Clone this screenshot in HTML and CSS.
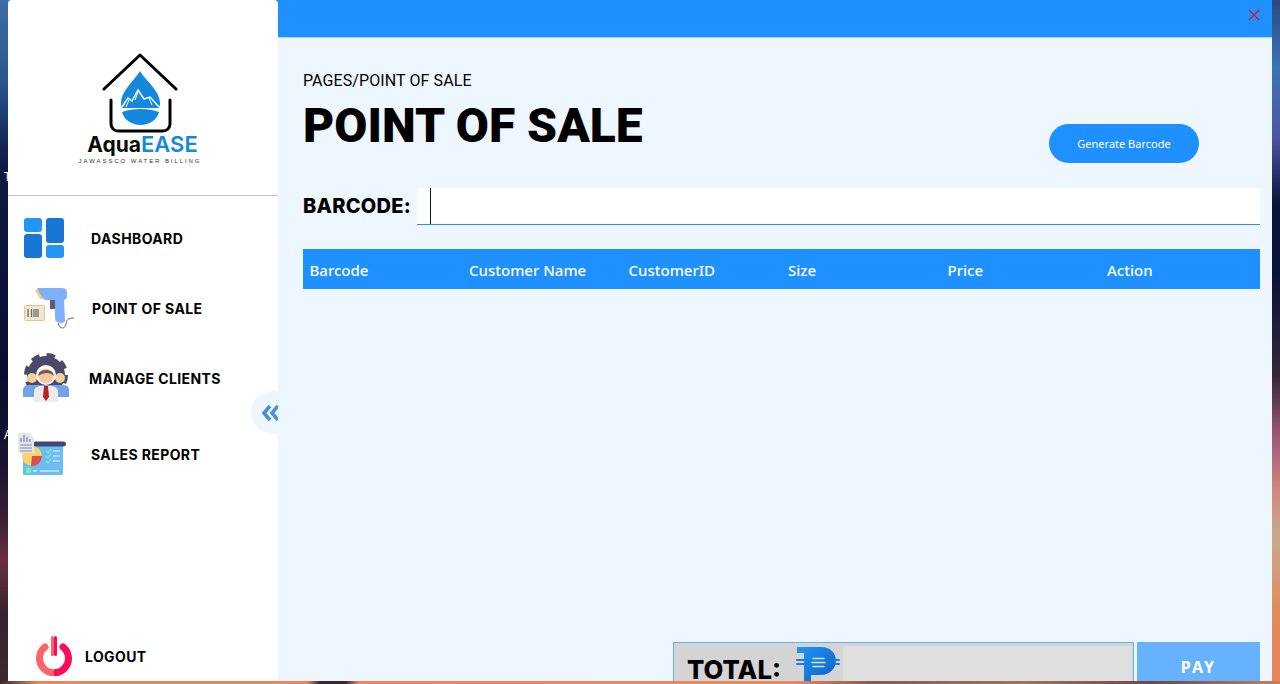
FILE: index.html
```html
<!DOCTYPE html>
<html lang="en">
<head>
    <meta charset="UTF-8">
    <meta name="viewport" content="width=device-width, initial-scale=1.0">
    <title>AquaEASE - Point of Sale</title>
    <link rel="stylesheet" href="styles.css">
</head>
<body>

    <span class="desk-label desk-label-t">T</span>
    <span class="desk-label desk-label-a">A</span>

    <div class="window">
        <aside class="sidebar">
            <div class="logo">
                <svg class="logo-mark" width="76" height="80" viewBox="0 0 76 80">
                    <path d="M2 36 38 2 74 36" fill="none" stroke="#000" stroke-width="3" stroke-linecap="round" stroke-linejoin="round"/>
                    <path d="M9 47V71a7 7 0 0 0 7 7H61a7 7 0 0 0 7-7V47" fill="none" stroke="#000" stroke-width="3" stroke-linecap="round"/>
                    <path d="M38 18C32 28 19 38 19 50 19 52 19.500 54 20 55H57C57.500 54 58 52 58 50 58 38 44 28 38 18Z" fill="#1488dd"/>
                    <path d="M20 54 26 45 30 48 36 37 42 46 48 44 57 54" fill="none" stroke="#fff" stroke-width="1.500"/>
                    <path d="M27 47 24 54M36 39 33 47M47 45 50 52" fill="none" stroke="#fff" stroke-width="1"/>
                    <path d="M20 59C30 55 47 55 57 59 55 67 47 72 38.500 72 30 72 22 67 20 59Z" fill="#1488dd"/>
                </svg>
                <div class="logo-name"><span class="logo-aqua">Aqua</span><span class="logo-ease">EASE</span></div>
                <div class="logo-sub">JAWASSCO WATER BILLING</div>
            </div>

            <nav class="nav">
                <a class="nav-item">
                    <svg class="nav-icon" viewBox="0 0 60 56">
                        <rect x="6" y="8" width="18" height="14" rx="3" fill="#2196f3"/>
                        <rect x="6" y="24" width="18" height="24" rx="3" fill="#1976d2"/>
                        <rect x="28" y="8" width="18" height="25" rx="3" fill="#1976d2"/>
                        <rect x="28" y="35" width="18" height="13" rx="3" fill="#2196f3"/>
                    </svg>
                    <span class="nav-label">DASHBOARD</span>
                </a>
                <a class="nav-item nav-item-pos">
                    <svg class="nav-icon" viewBox="0 0 60 56">
                        <path d="M17 10 24 9 29 20 22 19Z" fill="#f5cd85"/>
                        <rect x="32" y="19" width="5" height="10" fill="#5a5f6b"/>
                        <path d="M19 8H44Q49 8 49 13V16Q49 19 46 20L47 40Q47 43 43 43L39 42Q37 41 37 38V20H28Q24 19 19 8Z" fill="#7fb1fb"/>
                        <rect x="6.500" y="25.500" width="20" height="15" rx="1" fill="#efe6d6" stroke="#f3c27c"/>
                        <path d="M10 29V37M13.500 29V37M16 29V37M18 29V37M20 29V37" stroke="#6d6d72" stroke-width="1.300"/>
                        <path d="M40 43C42 50 47 49 48 44 48.500 40 50 38 56 38" fill="none" stroke="#5a5f6b" stroke-width="1"/>
                    </svg>
                    <span class="nav-label">POINT OF SALE</span>
                </a>
                <a class="nav-item nav-item-clients">
                    <svg class="nav-icon" viewBox="0 0 60 56">
                        <circle cx="28" cy="25" r="19" fill="#4a4a68"/>
                        <circle cx="28" cy="25" r="20" fill="none" stroke="#4a4a68" stroke-width="4" stroke-dasharray="8.500 7.200"/>
                        <path d="M5 47V40Q5 35 11 35H45Q51 35 51 40V47Z" fill="#6fa5e8"/>
                        <circle cx="14" cy="28" r="5" fill="#f6cf9c"/>
                        <circle cx="42" cy="28" r="5" fill="#f6cf9c"/>
                        <circle cx="28" cy="25" r="10" fill="#fff"/>
                        <circle cx="28" cy="26" r="7.500" fill="#f4c79f"/>
                        <path d="M20.500 26C19 18 37 18 35.500 26 33 22 25 22 20.500 26Z" fill="#7a5a48"/>
                        <path d="M16 52V42Q16 37 22 36H34Q40 37 40 42V52Z" fill="#ececec"/>
                        <path d="M26 36H30L31 47 28 51 25 47Z" fill="#b5202a"/>
                    </svg>
                    <span class="nav-label">MANAGE CLIENTS</span>
                </a>
                <a class="nav-item nav-item-report">
                    <svg class="nav-icon" viewBox="0 0 60 56">
                        <rect x="5" y="17" width="40" height="32" rx="1.500" fill="#6dbdf5"/>
                        <rect x="15" y="15.500" width="33" height="5" rx="2.500" fill="#3f4a7a"/>
                        <circle cx="14" cy="30" r="10" fill="#f8d56a"/>
                        <path d="M14 30H24A10 10 0 0 1 13 40Z" fill="#d94f4f"/>
                        <path d="M0 7H11L16 12V27H0Z" fill="#e6e7ee"/>
                        <path d="M3 16V12M6 16V9M9 16V11M12 16V13" stroke="#8f95ad" stroke-width="1.500"/>
                        <path d="M2 19H14M2 22H14M2 25H14" stroke="#a4a9bd" stroke-width="1.500"/>
                        <path d="M28 25 30 27 33 23M28 30 30 32 33 28M28 35 30 37 33 33" fill="none" stroke="#7eeab8" stroke-width="1.200"/>
                        <path d="M35 25H42M35 30H42M35 35H42" stroke="#e8f6ff" stroke-width="1.200"/>
                        <rect x="8" y="42" width="5" height="5" fill="#6ff0b4"/>
                        <path d="M15 45H19M22 45H41" stroke="#d0ecff" stroke-width="1.300"/>
                    </svg>
                    <span class="nav-label">SALES REPORT</span>
                </a>
            </nav>

            <a class="logout">
                <svg class="logout-icon" width="36" height="40" viewBox="0 0 36 40">
                    <defs>
                        <linearGradient id="powerFill" x1="0" x2="1" y1="0" y2="0">
                            <stop offset="0.500" stop-color="#ff6268"/>
                            <stop offset="0.500" stop-color="#ff0a5a"/>
                        </linearGradient>
                    </defs>
                    <path d="M9 11A14.500 14.500 0 1 0 27 11" fill="none" stroke="url(#powerFill)" stroke-width="7" stroke-linecap="round"/>
                    <rect x="15" y="0" width="3" height="20" rx="1.500" fill="#ff6268"/>
                    <rect x="18" y="0" width="3" height="20" rx="1.500" fill="#ff0a5a"/>
                </svg>
                <span class="nav-label">LOGOUT</span>
            </a>

            <button class="collapse">
                <svg width="18" height="18" viewBox="0 0 18 18">
                    <path d="M8 2 2 9 8 16M16 2 10 9 16 16" fill="none" stroke="#4a90d9" stroke-width="3.600"/>
                </svg>
            </button>
        </aside>

        <main class="main">
            <div class="topbar">
                <svg class="close" width="12" height="12" viewBox="0 0 12 12">
                    <path d="M1 1 11 11M11 1 1 11" stroke="#e0102a" stroke-width="1.100"/>
                </svg>
            </div>

            <div class="content">
                <div class="page-head">
                    <div>
                        <div class="breadcrumb">PAGES/POINT OF SALE</div>
                        <h1 class="page-title">POINT OF SALE</h1>
                    </div>
                    <button class="btn-generate">Generate Barcode</button>
                </div>

                <div class="barcode-row">
                    <label class="barcode-label" for="barcode">BARCODE:</label>
                    <div class="barcode-input" id="barcode"><span class="caret"></span></div>
                </div>

                <div class="table-head">
                    <span>Barcode</span>
                    <span>Customer Name</span>
                    <span>CustomerID</span>
                    <span>Size</span>
                    <span>Price</span>
                    <span>Action</span>
                </div>
                <div class="table-body"></div>

                <div class="checkout">
                    <div class="total-box">
                        <span class="total-label">TOTAL:</span>
                        <svg class="peso" width="44" height="38" viewBox="0 0 44 38">
                            <defs>
                                <linearGradient id="pesoFill" x1="0" x2="1" y1="0" y2="1">
                                    <stop offset="0" stop-color="#2196f3"/>
                                    <stop offset="1" stop-color="#0d5fc4"/>
                                </linearGradient>
                            </defs>
                            <path d="M1 1H25C34 1 40 7 40 14.500 40 22 34 29 25 29H15V38H8V7H1Z" fill="url(#pesoFill)"/>
                            <path d="M1 14H8M1 18H8M39 14H43M39 18H43" stroke="#1a7fe0" stroke-width="2" stroke-linecap="round"/>
                            <path d="M17 12.500H28M16 16.500H29M17 20.500H28" stroke="#cfe3fa" stroke-width="1.500" stroke-linecap="round"/>
                        </svg>
                        <div class="total-field"></div>
                    </div>
                    <button class="btn-pay">PAY</button>
                </div>
            </div>
        </main>
    </div>

</body>
</html>
```

FILE: styles.css
```css
* {
    box-sizing: border-box;
}
html, body {
    height: 100%;
}
body {
    margin: 0;
    overflow: hidden;
    font-family: "Noto Sans", sans-serif;
    /* desktop wallpaper showing around the window */
    background:
        linear-gradient(to right, #3a2a2c 0, #e8875a 3%, #e8875a 24%, #3a2a30 25%, #3a2a30 27%, #e8875a 28%, #e88a5e 62%, #8a5a50 68%, #a5705c 80%, #6a4a48 90%, #c5805e 100%) left bottom / 100% 3px no-repeat,
        linear-gradient(to bottom, #3c6ea8 0, #2a568e 12%, #0f1a44 24%, #0a0d30 55%, #1a1430 68%, #3a1f34 76%, #6a3040 82%, #35222e 90%, #3a2a30 100%) left top / 8px 100% no-repeat,
        linear-gradient(to bottom, #2a4a80 0, #3a75b5 10%, #4c56a5 20%, #0a1238 30%, #0a1238 40%, #35283a 55%, #a05a78 64%, #d08a80 72%, #c9a890 78%, #e08a5a 90%, #e8855a 100%) right top / 8px 100% no-repeat,
        #1a1430;
}
.desk-label {
    position: absolute;
    left: 4px;
    font-family: "Noto Sans", sans-serif;
    font-size: 12px;
    color: #ffffff;
}
.desk-label-t {
    top: 168px;
}
.desk-label-a {
    top: 426px;
}
.window {
    position: relative;
    display: flex;
    height: 681px;
    margin: 0 8px;
    overflow: hidden;
    background: #1e90ff;
}

/* sidebar */
.sidebar {
    position: relative;
    display: flex;
    flex-direction: column;
    width: 270px;
    flex-shrink: 0;
    overflow: hidden;
    background: #ffffff;
    border-radius: 4px 4px 0 0;
}
.logo {
    display: flex;
    flex-direction: column;
    align-items: center;
    height: 196px;
    padding: 53px 6px 0 0;
    border-bottom: 1px solid #c4c4c4;
}
.logo-mark {
    display: block;
}
.logo-name {
    margin: -1px 0 0 5px;
    line-height: 24px;
    white-space: nowrap;
}
.logo-aqua {
    font-family: Inter, sans-serif;
    font-size: 21px;
    font-weight: 700;
    color: #0b0b0b;
}
.logo-ease {
    font-family: Inter, sans-serif;
    font-size: 22px;
    font-weight: 600;
    color: #1488dd;
}
.logo-sub {
    font-family: "Liberation Sans", sans-serif;
    font-size: 6px;
    line-height: 7px;
    letter-spacing: 1.92px;
    color: #333333;
    white-space: nowrap;
}
.nav {
    display: flex;
    flex-direction: column;
    padding-top: 7px;
}
.nav-item {
    display: flex;
    align-items: center;
    gap: 13px;
    height: 70px;
    padding-left: 10px;
}
.nav-item-report {
    margin-top: 6px;
}
.nav-item-pos .nav-label {
    margin-left: 1px;
}
.nav-item-clients .nav-label {
    margin-left: -2px;
}
.nav-icon {
    width: 60px;
    height: 56px;
    flex-shrink: 0;
}
.nav-label {
    font-family: Inter, sans-serif;
    font-size: 14px;
    font-weight: 700;
    letter-spacing: 0.4px;
    color: #000000;
    white-space: nowrap;
}
.logout {
    display: flex;
    align-items: center;
    gap: 13px;
    margin-top: auto;
    padding: 0 0 5px 28px;
}
.collapse {
    position: absolute;
    top: 391px;
    left: 243px;
    display: flex;
    align-items: center;
    width: 43px;
    height: 43px;
    padding: 0 0 0 11px;
    border: none;
    border-radius: 50%;
    background: #eef7ff;
}

/* main panel */
.main {
    display: flex;
    flex-direction: column;
    flex: 1;
    min-width: 0;
    background: #eef7ff;
}
.topbar {
    display: flex;
    justify-content: flex-end;
    align-items: center;
    height: 38px;
    flex-shrink: 0;
    padding: 0 12px 8px 0;
    background: #1e90ff;
    border-bottom: 1px solid #a9d5ff;
}
.content {
    padding: 34px 12px 0 25px;
}
.page-head {
    display: flex;
    justify-content: space-between;
    height: 91px;
}
.breadcrumb {
    font-family: Roboto, sans-serif;
    font-size: 16px;
    line-height: 18px;
    letter-spacing: 0.1px;
    color: #000000;
}
.page-title {
    margin: 0;
    font-family: Roboto, sans-serif;
    font-size: 48px;
    font-weight: 900;
    line-height: 72px;
    color: #000000;
    white-space: nowrap;
}
.btn-generate {
    align-self: flex-end;
    width: 150px;
    height: 39px;
    margin-right: 61px;
    border: none;
    border-radius: 20px;
    background: #1e90ff;
    color: #ffffff;
    font-family: "Noto Sans", sans-serif;
    font-size: 11px;
}
.barcode-row {
    display: flex;
    align-items: center;
    gap: 6px;
    margin-top: 25px;
}
.barcode-label {
    padding-bottom: 2px;
    font-family: Inter, sans-serif;
    font-size: 20px;
    font-weight: 800;
    letter-spacing: 0.25px;
    color: #000000;
    white-space: nowrap;
}
.barcode-input {
    flex: 1;
    height: 37px;
    padding-left: 13px;
    background: #ffffff;
    border-bottom: 1px solid #1e90ff;
}
.caret {
    display: block;
    width: 1px;
    height: 36px;
    background: #111111;
}
.table-head {
    display: grid;
    grid-template-columns: repeat(6, 1fr);
    align-items: center;
    height: 40px;
    margin-top: 24px;
    background: #1e90ff;
    color: #ffffff;
    font-size: 15px;
    font-weight: 500;
}
.table-head span {
    padding: 2px 0 0 6.500px;
}
.table-body {
    height: 353px;
}
.checkout {
    display: flex;
    gap: 3px;
    height: 60px;
    margin-left: 370px;
}
.total-box {
    display: flex;
    align-items: flex-start;
    flex: 1;
    padding: 3px 1px 1px 13px;
    background: #d4d4d4;
    border: 1px solid #64b0ff;
}
.total-label {
    height: 35px;
    padding-top: 12px;
    font-family: Inter, sans-serif;
    font-size: 25.700px;
    font-weight: 800;
    line-height: 23px;
    color: #000000;
}
.peso {
    flex-shrink: 0;
    margin: 0 3px 0 15px;
}
.total-field {
    flex: 1;
    align-self: stretch;
    background: #e0e0e0;
}
.btn-pay {
    width: 123px;
    height: 60px;
    padding: 0 0 10px;
    border: none;
    background: #66b2ff;
    color: #ffffff;
    font-family: "Noto Sans", sans-serif;
    font-size: 16px;
    font-weight: 700;
    letter-spacing: 2px;
}
```
